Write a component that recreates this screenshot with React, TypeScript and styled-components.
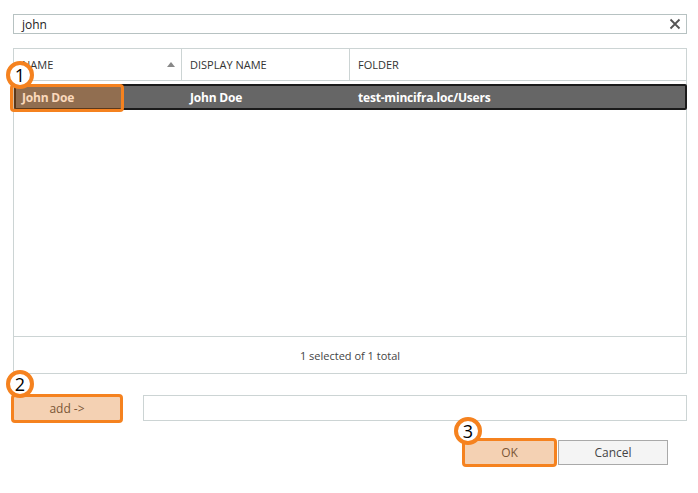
import React from 'react'
import styled, { createGlobalStyle } from 'styled-components'

const GlobalStyle = createGlobalStyle`
  body {
    margin: 0;
    background: #ffffff;
    font-family: 'Open Sans', 'Noto Sans', sans-serif;
    color: #333333;
  }
`

const ORANGE = '#f5821f'

const Dialog = styled.div`
  width: 698px;
  height: 493px;
  box-sizing: border-box;
  padding: 14px 11px 0 13px;
  display: flex;
  flex-direction: column;
`

const SearchBox = styled.div`
  height: 18px;
  border: 1px solid #b7c2c2;
  display: flex;
  align-items: center;
  padding: 0 5px 0 8px;
  font-size: 12px;
  color: #222;
`

const SearchText = styled.span`
  flex: 1;
`

const Grid = styled.div`
  margin-top: 14px;
  height: 324px;
  border: 1px solid #ccd4d4;
  display: flex;
  flex-direction: column;
`

const HeaderRow = styled.div`
  display: grid;
  grid-template-columns: 168px 168px 1fr;
  height: 31px;
  border-bottom: 1px solid #ccd4d4;
`

const HeaderCell = styled.div<{ $last?: boolean }>`
  display: flex;
  align-items: center;
  padding: 0 8px;
  font-size: 11px;
  color: #333;
  border-right: ${({ $last }) => ($last ? 'none' : '1px solid #ccd4d4')};
`

const HeaderLabel = styled.span`
  flex: 1;
`

const SortArrow = styled.span`
  width: 0;
  height: 0;
  border-left: 4px solid transparent;
  border-right: 4px solid transparent;
  border-bottom: 5px solid #888;
  margin-right: -2px;
`

const Body = styled.div`
  flex: 1;
  padding-top: 3px;
`

const DataRow = styled.div`
  display: grid;
  grid-template-columns: 168px 168px 1fr;
  height: 22px;
  background: #666666;
  border: 2px solid #1b1b1b;
  border-radius: 2px;
  margin-right: -1px;
`

const DataCell = styled.div`
  position: relative;
  display: flex;
  align-items: center;
  padding: 0 6px;
  font-size: 12px;
  font-weight: 700;
  letter-spacing: -0.2px;
  color: #ffffff;
`

const Footer = styled.div`
  height: 36px;
  border-top: 1px solid #ccd4d4;
  display: flex;
  align-items: center;
  justify-content: center;
  font-size: 11px;
  color: #444;
`

const AddRow = styled.div`
  margin-top: 21px;
  display: flex;
  align-items: center;
  gap: 22px;
`

const Button = styled.button<{ $width: number }>`
  position: relative;
  width: ${({ $width }) => $width}px;
  height: 25px;
  box-sizing: border-box;
  border: 1px solid #a9a9a9;
  background: #f4f4f4;
  font-family: 'Open Sans', 'Noto Sans', sans-serif;
  font-size: 12px;
  color: #444;
  padding: 0;
`

const TextField = styled.div`
  flex: 1;
  height: 26px;
  border: 1px solid #ccd4d4;
  box-sizing: border-box;
`

const ActionRow = styled.div`
  margin-top: 19px;
  display: flex;
  justify-content: flex-end;
  gap: 3px;
  padding-right: 19px;
`

const Highlight = styled.span<{ $inset: string }>`
  position: absolute;
  inset: ${({ $inset }) => $inset};
  border: 3px solid ${ORANGE};
  border-radius: 4px;
  background: rgba(245, 130, 31, 0.3);
  pointer-events: none;
`

const Badge = styled.span<{ $left: number; $top: number }>`
  position: absolute;
  left: ${({ $left }) => $left}px;
  top: ${({ $top }) => $top}px;
  width: 20px;
  height: 20px;
  border-radius: 50%;
  border: 4px solid ${ORANGE};
  background: #fff;
  display: flex;
  align-items: center;
  justify-content: center;
  font-family: 'Open Sans', sans-serif;
  font-weight: 400;
  font-size: 18px;
  color: #000;
  line-height: 1;
  letter-spacing: 0;
  z-index: 2;
`

const CloseIcon = () => (
  <svg width="12" height="12" viewBox="0 0 12 12">
    <path d="M1.5 1.5L10.5 10.5M10.5 1.5L1.5 10.5" stroke="#555" strokeWidth="1.8" />
  </svg>
)

export default function App() {
  return (
    <>
      <GlobalStyle />
      <Dialog>
        <SearchBox>
          <SearchText>john</SearchText>
          <CloseIcon />
        </SearchBox>

        <Grid>
          <HeaderRow>
            <HeaderCell>
              <HeaderLabel>NAME</HeaderLabel>
              <SortArrow />
            </HeaderCell>
            <HeaderCell>DISPLAY NAME</HeaderCell>
            <HeaderCell $last>FOLDER</HeaderCell>
          </HeaderRow>
          <Body>
            <DataRow>
              <DataCell>
                John Doe
                <Highlight $inset="-2px 60px -4px -6px" />
                <Badge $left={-10} $top={-25}>1</Badge>
              </DataCell>
              <DataCell>John Doe</DataCell>
              <DataCell>test-mincifra.loc/Users</DataCell>
            </DataRow>
          </Body>
          <Footer>1 selected of 1 total</Footer>
        </Grid>

        <AddRow>
          <Button $width={108}>
            add -&gt;
            <Highlight $inset="-3px -3px -3px -3px" />
            <Badge $left={-8} $top={-27}>2</Badge>
          </Button>
          <TextField />
        </AddRow>

        <ActionRow>
          <Button $width={91}>
            OK
            <Highlight $inset="-3px -3px -3px -3px" />
            <Badge $left={-11} $top={-24}>3</Badge>
          </Button>
          <Button $width={110}>Cancel</Button>
        </ActionRow>
      </Dialog>
    </>
  )
}
